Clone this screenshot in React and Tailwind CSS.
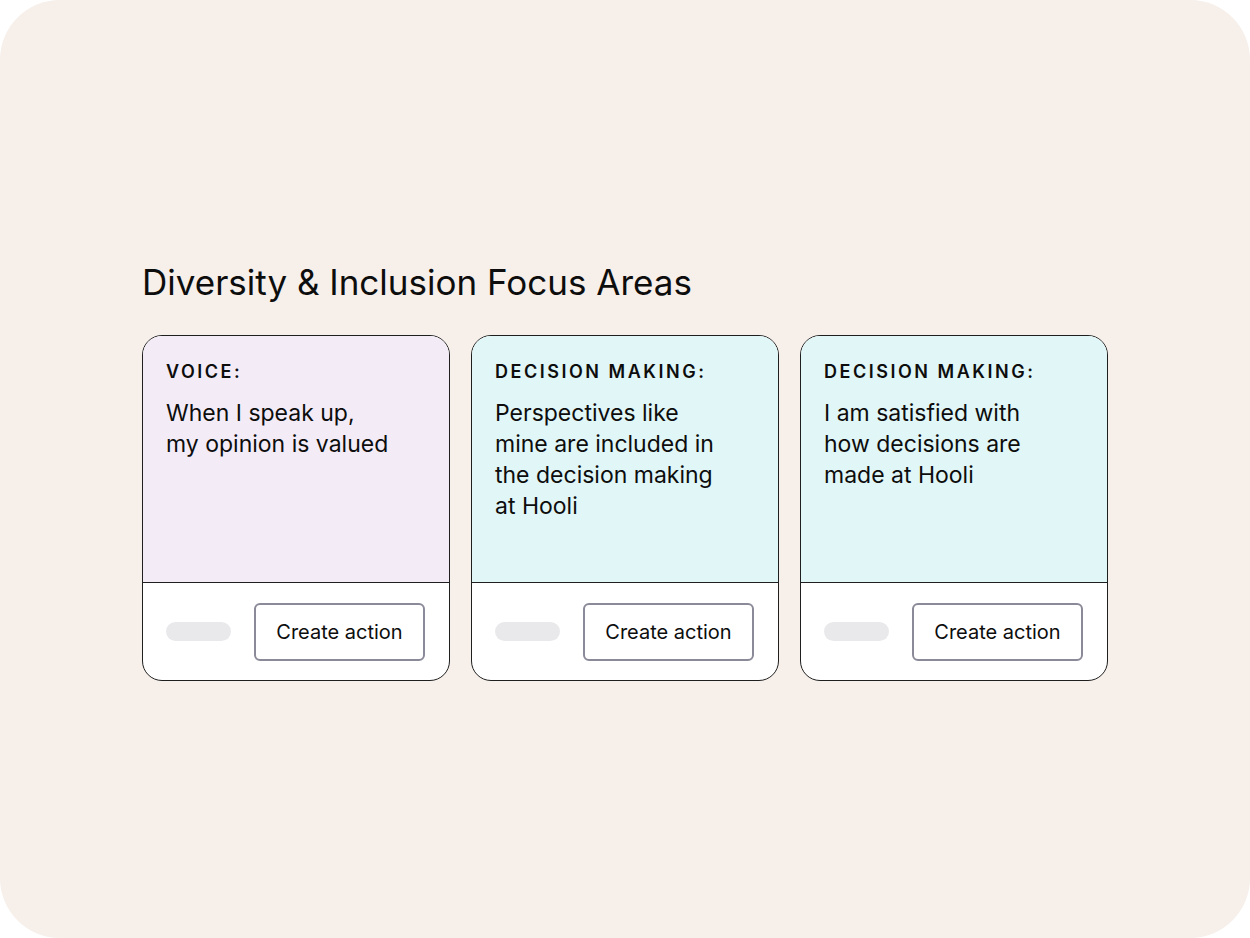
const cards = [
  {
    label: "VOICE:",
    lines: ["When I speak up,", "my opinion is valued"],
    bg: "bg-[#f3ecf7]",
  },
  {
    label: "DECISION MAKING:",
    lines: ["Perspectives like", "mine are included in", "the decision making", "at Hooli"],
    bg: "bg-[#e1f6f7]",
  },
  {
    label: "DECISION MAKING:",
    lines: ["I am satisfied with", "how decisions are", "made at Hooli"],
    bg: "bg-[#e1f6f7]",
  },
];

function FocusCard({ card }) {
  return (
    <div className="w-[308px] h-[346px] flex flex-col rounded-[20px] border border-[#1f1f1f] overflow-hidden bg-white">
      <div className={`${card.bg} h-[247px] pl-[23px] pr-6 pt-6 border-b border-[#1f1f1f]`}>
        <div className="text-[18px] leading-[24px] font-semibold tracking-[0.14em] text-[#0d0d0d]">
          {card.label}
        </div>
        <div className="mt-[14px] text-[23px] leading-[31px] text-[#0d0d0d]">
          {card.lines.map((l, i) => (
            <div key={i}>{l}</div>
          ))}
        </div>
      </div>
      <div className="flex-1 flex items-center justify-between pl-[23px] pr-6">
        <div className="w-[65px] h-[19px] rounded-full bg-[#e9e9ec]" />
        <button className="w-[171px] h-[58px] rounded-[6px] border-2 border-[#8b8a99] bg-white text-[20px] text-[#0d0d0d]">
          Create action
        </button>
      </div>
    </div>
  );
}

export default function App() {
  return (
    <div className="w-[1250px] h-[938px] bg-white" style={{ fontFamily: "Inter, 'Noto Sans', sans-serif" }}>
      <div className="w-full h-full rounded-[60px] bg-[#f6efea] pl-[142px] pt-[261px]">
        <h1 className="text-[35px] leading-[43px] font-normal text-[#0d0d0d]">
          Diversity &amp; Inclusion Focus Areas
        </h1>
        <div className="mt-[31px] flex gap-[21px]">
          {cards.map((c, i) => (
            <FocusCard key={i} card={c} />
          ))}
        </div>
      </div>
    </div>
  );
}
